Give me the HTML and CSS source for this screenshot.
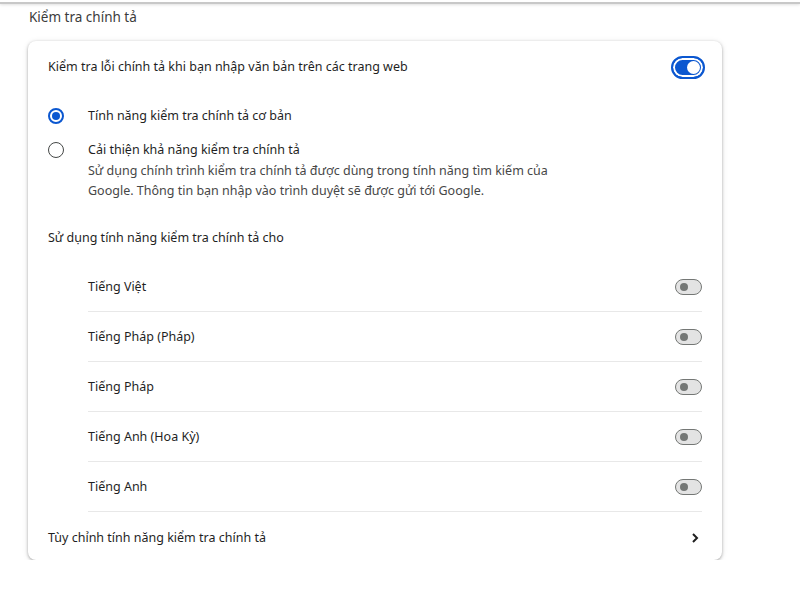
FILE: index.html
```html
<!DOCTYPE html>
<html lang="vi">
<head>
    <meta charset="UTF-8">
    <title>Kiểm tra chính tả</title>
    <link rel="stylesheet" href="styles.css">
</head>
<body>
    <div class="topbar"></div>
    <div class="page">
        <h2 class="section-title">Kiểm tra chính tả</h2>
        <div class="card">
            <div class="row main-row">
                <span>Kiểm tra lỗi chính tả khi bạn nhập văn bản trên các trang web</span>
                <span class="toggle on"><span class="knob"></span></span>
            </div>

            <div class="radio-row first">
                <span class="radio checked"></span>
                <div class="radio-text">
                    <div>Tính năng kiểm tra chính tả cơ bản</div>
                </div>
            </div>
            <div class="radio-row">
                <span class="radio"></span>
                <div class="radio-text">
                    <div>Cải thiện khả năng kiểm tra chính tả</div>
                    <div class="desc">Sử dụng chính trình kiểm tra chính tả được dùng trong tính năng tìm kiếm của<br>Google. Thông tin bạn nhập vào trình duyệt sẽ được gửi tới Google.</div>
                </div>
            </div>

            <div class="sub-title">Sử dụng tính năng kiểm tra chính tả cho</div>

            <div class="lang-list">
                <div class="lang-row">
                    <span>Tiếng Việt</span>
                    <span class="toggle"><span class="knob"></span></span>
                </div>
                <div class="lang-row">
                    <span>Tiếng Pháp (Pháp)</span>
                    <span class="toggle"><span class="knob"></span></span>
                </div>
                <div class="lang-row">
                    <span>Tiếng Pháp</span>
                    <span class="toggle"><span class="knob"></span></span>
                </div>
                <div class="lang-row">
                    <span>Tiếng Anh (Hoa Kỳ)</span>
                    <span class="toggle"><span class="knob"></span></span>
                </div>
                <div class="lang-row">
                    <span>Tiếng Anh</span>
                    <span class="toggle"><span class="knob"></span></span>
                </div>
            </div>

            <div class="row link-row">
                <span>Tùy chỉnh tính năng kiểm tra chính tả</span>
                <svg class="chevron" width="10" height="12" viewBox="0 0 10 12">
                    <path d="M3 2 L7 6 L3 10" fill="none" stroke="#1f1f1f" stroke-width="2"/>
                </svg>
            </div>
        </div>
    </div>
</body>
</html>
```

FILE: styles.css
```css
body {
    margin: 0;
    padding: 0;
    background-color: #fff;
    font-family: "Noto Sans", "Open Sans", sans-serif;
    font-size: 12.5px;
    line-height: 20px;
    color: #1f1f1f;
}
.topbar {
    height: 2px;
    border-bottom: 2px solid #c8c8c8;
    box-shadow: 0 1px 3px rgba(0, 0, 0, 0.12);
}
.page {
    padding: 0 78px 0 28px;
}
.section-title {
    margin: 0;
    padding: 3px 0 0 1px;
    height: 34px;
    font-size: 13.5px;
    line-height: 20px;
    font-weight: normal;
    color: #3c3c3c;
}
.card {
    background-color: #fff;
    border-radius: 8px;
    box-shadow: 0 1px 3px rgba(0, 0, 0, 0.3), 0 1px 6px rgba(0, 0, 0, 0.1);
    padding: 0 20px;
}
.row {
    display: flex;
    align-items: center;
    justify-content: space-between;
}
.main-row {
    height: 52px;
}
/* toggles */
.toggle {
    position: relative;
    display: inline-block;
    box-sizing: border-box;
    width: 27px;
    height: 16px;
    border: 1px solid #747775;
    border-radius: 8px;
    background-color: #e3e3e3;
}
.toggle .knob {
    position: absolute;
    top: 3px;
    left: 4px;
    width: 8px;
    height: 8px;
    border-radius: 50%;
    background-color: #747775;
}
.toggle.on {
    width: 34px;
    height: 23px;
    border: 2px solid #0b57d0;
    border-radius: 12px;
    background-color: #0b57d0;
    box-shadow: inset 0 0 0 2px #fff;
    margin-right: -3px;
}
.toggle.on .knob {
    top: 3px;
    left: 14px;
    width: 13px;
    height: 13px;
    background-color: #fff;
}
/* radios */
.radio-row {
    display: flex;
    align-items: flex-start;
    margin-top: 14px;
}
.radio-row.first {
    margin-top: 13px;
}
.radio {
    box-sizing: border-box;
    width: 16px;
    height: 16px;
    margin: 2px 24px 0 0;
    border: 1.5px solid #444746;
    border-radius: 50%;
    flex-shrink: 0;
    position: relative;
}
.radio.checked {
    border: 2px solid #0b57d0;
}
.radio.checked::after {
    content: "";
    position: absolute;
    top: 2px;
    left: 2px;
    width: 8px;
    height: 8px;
    border-radius: 50%;
    background-color: #0b57d0;
}
.desc {
    color: #474747;
    margin-top: 1px;
}
.sub-title {
    margin-top: 27px;
}
.lang-list {
    margin-top: 14px;
    padding-left: 40px;
}
.lang-row {
    display: flex;
    align-items: center;
    justify-content: space-between;
    height: 49px;
    border-bottom: 1px solid #e8e8e8;
}
.link-row {
    height: 45px;
    padding-top: 3px;
}
.chevron {
    margin-right: 2px;
}
```
